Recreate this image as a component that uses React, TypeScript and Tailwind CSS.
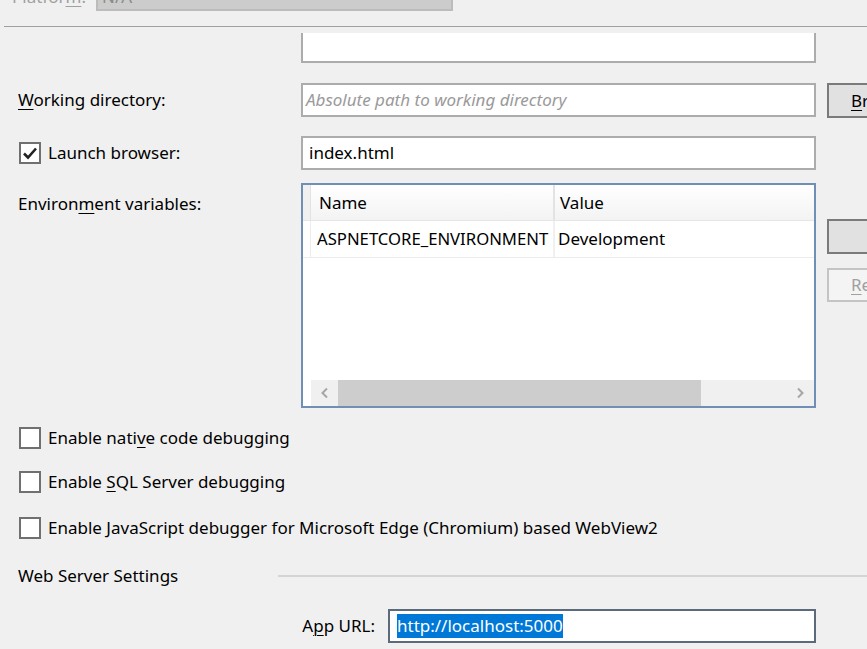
import React from "react";

function Key({ children }: { children: React.ReactNode }) {
  return <span className="underline underline-offset-[3px] decoration-1">{children}</span>;
}

function CheckBox({ checked }: { checked?: boolean }) {
  return (
    <div className="w-[22px] h-[22px] border-2 border-[#707070] bg-white flex items-center justify-center shrink-0">
      {checked && (
        <svg width="16" height="16" viewBox="0 0 16 16">
          <path d="M2 8.5 L6 12.5 L14 3.5" fill="none" stroke="#222" strokeWidth="2.6" />
        </svg>
      )}
    </div>
  );
}

function CheckRow({ label, mt }: { label: React.ReactNode; mt: string }) {
  return (
    <div className={`flex items-center gap-[7px] pl-[19px] h-[22px] ${mt}`}>
      <CheckBox />
      <span className="leading-[22px]">{label}</span>
    </div>
  );
}

export default function App() {
  return (
    <div className="w-[867px] h-[649px] overflow-hidden bg-[#f0f0f0] text-[17px] text-black font-['Noto_Sans',sans-serif]">
      {/* cut-off platform row */}
      <div className="h-[11px] overflow-hidden">
        <div className="flex items-start -mt-[23px] h-[34px]">
          <span className="pl-[12px] pt-[8px] w-[96px] leading-[23px] text-[#a0a0a0]">
            Platfor<Key>m</Key>:
          </span>
          <div className="w-[357px] h-[34px] bg-[#cccccc] border-2 border-[#bcbcbc] pl-[4px] pt-[6px] leading-[23px] text-[#8a8a8a]">
            N/A
          </div>
        </div>
      </div>

      <div className="mt-[15px] ml-[4px] h-px bg-[#a0a0a0]" />

      <div className="mt-[6px] grid grid-cols-[301px_515px_1fr] items-start">
        {/* partial textarea */}
        <div />
        <div className="h-[30px] bg-white border-x-2 border-b-2 border-[#acacac]" />
        <div />

        {/* working directory */}
        <div className="pl-[18px] mt-[20px] h-[34px] flex items-center">
          <span>
            <Key>W</Key>orking directory:
          </span>
        </div>
        <div className="mt-[20px] h-[34px] bg-white border-2 border-[#acacac] pl-[3px] flex items-center italic text-[#9a9a9a]">
          Absolute path to working directory
        </div>
        <div className="mt-[20px] ml-[11px] h-[35px] bg-[#e1e1e1] border-2 border-[#7a7a7a] pl-[22px] flex items-center">
          <span>
            <Key>B</Key>r
          </span>
        </div>

        {/* launch browser */}
        <div className="mt-[18px] h-[34px] flex items-center gap-[7px] pl-[19px]">
          <CheckBox checked />
          <span>Launch browser:</span>
        </div>
        <div className="mt-[18px] h-[34px] bg-white border-2 border-[#acacac] pl-[6px] flex items-center">
          index.html
        </div>
        <div />

        {/* environment variables */}
        <div className="pl-[18px] mt-[13px] pt-[8px]">
          Environ<Key>m</Key>ent variables:
        </div>
        <div className="mt-[13px] h-[225px] border-2 border-[#6f8fb5] bg-white flex flex-col">
          <div className="flex h-[36px] border-b border-[#e6e6e6] bg-gradient-to-b from-white to-[#f3f3f3]">
            <div className="w-[8px] bg-[#f0f0f0] border-r border-[#e2e2e2]" />
            <div className="w-[244px] pl-[8px] flex items-center border-r-2 border-[#e3e3e3]">Name</div>
            <div className="flex-1 pl-[5px] flex items-center">Value</div>
          </div>
          <div className="flex h-[37px] border-b border-[#ececec]">
            <div className="w-[8px] border-r border-[#ececec]" />
            <div className="w-[244px] pl-[6px] flex items-center border-r-2 border-[#f0f0f0] whitespace-nowrap overflow-hidden text-[16.7px]">
              ASPNETCORE_ENVIRONMENT
            </div>
            <div className="flex-1 pl-[3px] flex items-center">Development</div>
          </div>
          <div className="flex-1" />
          <div className="flex h-[26px] ml-[8px] bg-[#f0f0f0]">
            <div className="w-[27px] flex items-center justify-center">
              <svg width="10" height="12" viewBox="0 0 10 12">
                <path d="M7 1.5 L2.5 6 L7 10.5" fill="none" stroke="#a6a6a6" strokeWidth="2" />
              </svg>
            </div>
            <div className="w-[363px] bg-[#cdcdcd]" />
            <div className="flex-1 flex items-center justify-end pr-[9px]">
              <svg width="10" height="12" viewBox="0 0 10 12">
                <path d="M3 1.5 L7.5 6 L3 10.5" fill="none" stroke="#a6a6a6" strokeWidth="2" />
              </svg>
            </div>
          </div>
        </div>
        <div className="ml-[11px] mt-[49px] flex flex-col gap-[14px]">
          <div className="h-[35px] bg-[#e1e1e1] border-2 border-[#7a7a7a]" />
          <div className="h-[34px] bg-[#f4f4f4] border-2 border-[#c4c4c4] pl-[22px] flex items-center text-[#a0a0a0]">
            <span>
              <Key>R</Key>e
            </span>
          </div>
        </div>
      </div>

      <CheckRow
        mt="mt-[19px]"
        label={
          <>
            Enable nati<Key>v</Key>e code debugging
          </>
        }
      />
      <CheckRow
        mt="mt-[22px]"
        label={
          <>
            Enable <Key>S</Key>QL Server debugging
          </>
        }
      />
      <CheckRow mt="mt-[24px]" label="Enable JavaScript debugger for Microsoft Edge (Chromium) based WebView2" />

      <div className="mt-[25px] h-[24px] flex items-center">
        <span className="pl-[18px] w-[278px] leading-[24px]">Web Server Settings</span>
        <div className="flex-1 h-[2px] bg-[#d5d5d5]" />
      </div>

      <div className="mt-[21px] flex items-center">
        <span className="w-[375px] text-right">
          A<Key>p</Key>p URL:
        </span>
        <div className="ml-[13px] w-[428px] h-[34px] bg-white border-2 border-[#5b6b7c] pl-[7px] flex items-center">
          <span className="bg-[#0078d7] text-white leading-[24px]">http://localhost:5000</span>
        </div>
      </div>
    </div>
  );
}
